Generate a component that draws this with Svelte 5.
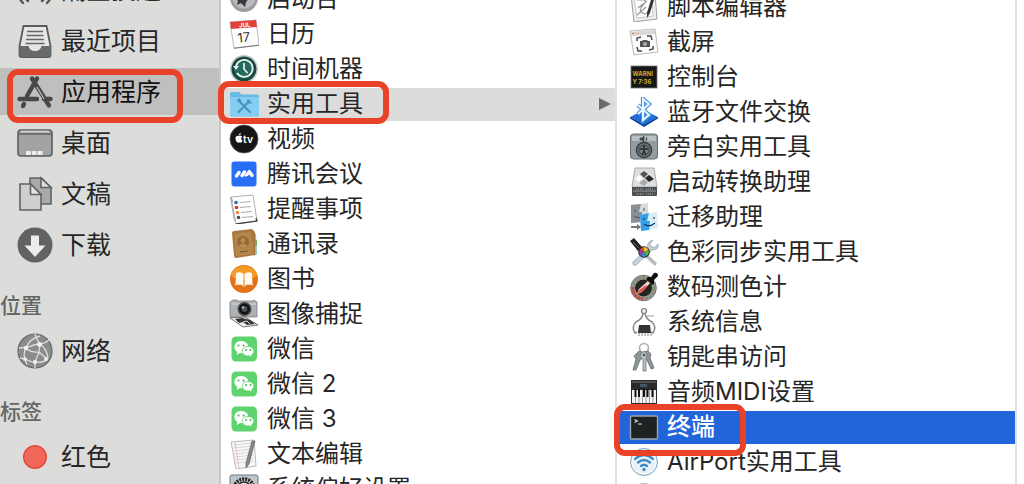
<script>
    const places = [
        {
            title: null,
            items: [
                { id: "airdrop", name: "隔空投送" },
                { id: "recents", name: "最近项目" },
                { id: "apps", name: "应用程序" },
                { id: "desktop", name: "桌面" },
                { id: "documents", name: "文稿" },
                { id: "downloads", name: "下载" },
            ],
        },
        { title: "位置", items: [{ id: "network", name: "网络" }] },
        { title: "标签", items: [{ id: "red", name: "红色" }] },
    ];

    const apps = [
        { id: "launchpad", name: "启动台" },
        { id: "calendar", name: "日历" },
        { id: "timemachine", name: "时间机器" },
        { id: "utilities", name: "实用工具", folder: true },
        { id: "tv", name: "视频" },
        { id: "meeting", name: "腾讯会议" },
        { id: "reminders", name: "提醒事项" },
        { id: "contacts", name: "通讯录" },
        { id: "books", name: "图书" },
        { id: "capture", name: "图像捕捉" },
        { id: "wechat", name: "微信" },
        { id: "wechat", name: "微信 2" },
        { id: "wechat", name: "微信 3" },
        { id: "textedit", name: "文本编辑" },
        { id: "settings", name: "系统偏好设置" },
    ];

    const utilities = [
        { id: "script", name: "脚本编辑器" },
        { id: "screenshot", name: "截屏" },
        { id: "console", name: "控制台" },
        { id: "bluetooth", name: "蓝牙文件交换" },
        { id: "voiceover", name: "旁白实用工具" },
        { id: "bootcamp", name: "启动转换助理" },
        { id: "migration", name: "迁移助理" },
        { id: "colorsync", name: "色彩同步实用工具" },
        { id: "colormeter", name: "数码测色计" },
        { id: "sysinfo", name: "系统信息" },
        { id: "keychain", name: "钥匙串访问" },
        { id: "midi", name: "音频MIDI设置" },
        { id: "terminal", name: "终端" },
        { id: "airport", name: "AirPort实用工具" },
        { id: "activity", name: "活动监视器" },
    ];

    // the path that the guide walks through
    const steps = ["apps", "utilities", "terminal"];

    let place = $state("应用程序");
    let app = $state("实用工具");
    let utility = $state("终端");
</script>

{#snippet sideIcon(id)}
    <svg class="side-icon" viewBox="0 0 36 36" aria-hidden="true">
        {#if id === "airdrop"}
            <g fill="none" stroke="#555" stroke-width="2.4" stroke-linecap="round">
                <path d="M6 31a17 17 0 1 1 24 0M11 29a11 11 0 1 1 14 0M15 24a5 5 0 1 1 6 0" />
            </g>
        {:else if id === "recents"}
            <path d="M6.500 3h23l4 20v9q0 2-2 2h-27q-2 0-2-2v-9z" fill="#e6e6e5" stroke="#5c5c5c" stroke-width="1.8" />
            <path d="M2.500 23h9q1 5 6.500 5t6.500-5h9v9q0 2-2 2h-27q-2 0-2-2z" fill="#6a6a6a" />
            <path d="M10 8.500h16M9.500 12.500h17M9 16.500h18M8.500 20.500h19" stroke="#666" stroke-width="1.500" />
        {:else if id === "apps"}
            <g stroke="#484848" stroke-width="4.400" stroke-linecap="round" fill="none">
                <path d="M20 4.500L10 22M15 4.500l17 27M2.500 25H20M27 25h6.500M7 30l-1 2" />
            </g>
            <path d="M20 13l7 12" stroke="#c0c0bf" stroke-width="1.200" />
        {:else if id === "desktop"}
            <rect x="1" y="5" width="34" height="26" rx="3" fill="#a3a3a3" stroke="#5d5d5d" stroke-width="1.600" />
            <path d="M2 9h32" stroke="#5d5d5d" stroke-width="1.400" />
            <path d="M4 6.500h28" stroke="#d9d9d9" stroke-width="1.500" />
            <path d="M9 26h5v4H9zM15 26h4.500v4H15zM20.500 26h5v4h-5z" fill="#ededed" />
        {:else if id === "documents"}
            <g stroke="#626262" stroke-width="1.600">
                <path d="M13 2h11.500L34 11.500V28H13z" fill="#a9a9a9" />
                <path d="M24 2v9.500h10z" fill="#dedede" />
                <path d="M3 8h10.500L24 18.500V34H3z" fill="#cfcfce" />
                <path d="M13.500 8v10.500H24z" fill="#e4e4e3" />
            </g>
        {:else if id === "downloads"}
            <circle cx="18" cy="18" r="17.500" fill="#626262" />
            <path d="M14 8.500h8v10h6.500L18 30 7.500 18.500H14z" fill="#ececeb" />
        {:else if id === "network"}
            <circle cx="18" cy="18" r="17" fill="#8c8c8c" stroke="#686868" stroke-width="1.200" />
            <g fill="none" stroke="#dedede" stroke-width="1.300">
                <path d="M2 15q7-1 7 0q9-4 14-4 6-1 9-4M9 15q3-9 14-12M9 15q-3 6-1 11q8 4 11 3q8 1 11-3M23 11l-1 8-4 10M23 11q-4-5-5-10M23 11q7 5 8 14M22 19l8 7M22 19q-8 1-13-4M3 25l5 1 2 6M18 29v6" />
            </g>
            <g fill="#f2f2f2">
                <circle cx="9" cy="15" r="2.200" /><circle cx="22.500" cy="11.500" r="2.400" />
                <circle cx="8" cy="26" r="1.800" /><circle cx="18" cy="29" r="2" /><circle cx="29" cy="26" r="1.900" />
            </g>
        {:else}
            <circle cx="18" cy="18" r="11.300" fill="#f1675a" stroke="#e0483f" stroke-width="1.400" />
        {/if}
    </svg>
{/snippet}

{#snippet icon(id)}
    <svg class="icon" viewBox="0 0 30 30" aria-hidden="true">
        {#if id === "launchpad"}
            <circle cx="15" cy="14" r="14" fill="#9b9c9e" />
            <circle cx="15" cy="13" r="11.500" fill="#b9babc" />
            <path d="M21 5q-8 1-11 8l-4 1 3 3-1 4 4-2 4 4 1-5q5-5 4-13z" fill="#37393c" />
        {:else if id === "calendar"}
            <path d="M1 3L27 1l3 25-25 3z" fill="#fdfdfd" stroke="#aaa" stroke-width=".8" />
            <path d="M1 3L27 1l1 7L2 10z" fill="#e2403a" />
            <text x="10" y="8.300" font-size="6" font-weight="700" fill="#fff" transform="rotate(-4 14 6)">JUL</text>
            <text x="8.500" y="23" font-size="13" fill="#333" transform="rotate(-6 15 18)">17</text>
            <path d="M5 29.300l25-3" stroke="#777" />
        {:else if id === "timemachine"}
            <circle cx="15" cy="15" r="14" fill="#c6cccb" />
            <circle cx="15" cy="15" r="12.500" fill="#17493f" />
            <circle cx="15" cy="15" r="9.500" fill="#256b5d" />
            <path d="M7 12a8.500 8.500 0 1 1 1 7" fill="none" stroke="#e8f3f0" stroke-width="1.800" />
            <path d="M4 12l6 0-3 4z" fill="#e8f3f0" />
            <path d="M15 9v6l3.500 4" fill="none" stroke="#e8f3f0" stroke-width="1.700" />
        {:else if id === "utilities"}
            <path d="M1 5q0-2 2-2h7l2.500 2.500H28q2 0 2 2V26q0 1.500-2 1.500H3q-2 0-2-1.500z" fill="#68b9e3" />
            <path d="M1 8h29v18q0 1-2 1H3q-2 0-2-1z" fill="#85cef2" />
            <path d="M10 12l11 11M20.500 12L9.500 23" stroke="#4a93bd" stroke-width="2.200" stroke-linecap="round" />
            <path d="M18.500 10.500l1 3 3 .5M8 12l2-2 2 2" fill="none" stroke="#4a93bd" stroke-width="1.600" />
        {:else if id === "tv"}
            <circle cx="15" cy="15" r="14" fill="#161616" stroke="#555" stroke-width=".8" />
            <path d="M10.200 12.200c1.300-1 2.700-.2 3 .2-1.600 1-1.300 3.300.4 4-.5 1.300-1.400 2.500-2.300 2.200-.8-.3-1.100-.3-1.900 0-1.500.5-4.200-4.200-2.300-6.100.9-.9 2-.8 3.100-.3zM9.800 11.500c0-1.300 1-2.300 2-2.400.1 1.300-.9 2.300-2 2.400z" fill="#fff" />
            <text x="14" y="18.500" font-size="10.500" font-weight="600" fill="#fff">tv</text>
        {:else if id === "meeting"}
            <rect x="2.500" y="2.500" width="25" height="25" rx="3" fill="#286ff5" />
            <path d="M7.500 17l2.500-3.500M13 16.500l2.500-3.500" stroke="#fff" stroke-width="3.400" stroke-linecap="round" />
            <path d="M15 17l4-5.500q1.200-1.300 2.500 0l3 4q1 2.500-1.500 2.500-1.500 0-2.800-2.500-2.200 3-5.200 1.500z" fill="#fff" />
        {:else if id === "reminders"}
            <path d="M2 3l22-2 4 26-21 3z" fill="#fff" stroke="#999" stroke-width=".8" />
            <path d="M7 30l21-3-1-3" fill="none" stroke="#444" stroke-width="1.300" />
            <path d="M2 3l2 5M1.500 3l4 24" stroke="#aaa" />
            <path d="M10.500 8.500l11-1M11 13.500l11-1M12 18.500l11-1M13 23.500l11-1" stroke="#aaa" />
            <circle cx="7" cy="8.500" r="1.800" fill="#2d69ca" /><circle cx="7.500" cy="13.500" r="1.800" fill="#d8372c" />
            <circle cx="8.500" cy="18.500" r="1.800" fill="#ef8b3c" /><circle cx="9.500" cy="23.500" r="1.800" fill="#544c51" />
        {:else if id === "contacts"}
            <path d="M25 5l2 0 1 20-3 2z" fill="#80bfb1" />
            <path d="M26 11h2v6h-2z" fill="#78ad53" />
            <path d="M3 4Q3 2 5 2l18-2 3 3v23L7 29q-2 0-2-2z" fill="#a9783f" />
            <path d="M5 5l17-2 3 22-18 2z" fill="#b3864c" />
            <circle cx="14" cy="13" r="6" fill="#94693a" />
            <circle cx="14" cy="11.500" r="2.400" fill="#b88b50" /><path d="M9.500 17q4.500-5 9 0-4 4-9 0z" fill="#b88b50" />
            <path d="M11 23l8-1" stroke="#795123" />
        {:else if id === "books"}
            <circle cx="15" cy="15" r="14" fill="#e17319" />
            <path d="M1.500 12a14 14 0 0 1 27 0q-13 8-27 0z" fill="#f39b27" />
            <path d="M7 9q5-2 7.500 1v11.500q-3-2.500-8-1L7 9zM23 9q-5-2-7.500 1v11.500q3-2.500 8-1z" fill="#fffaf1" />
            <path d="M6 21q6-2 9 1.500 3-3.500 9-1.500" fill="none" stroke="#ffe7c3" />
        {:else if id === "capture"}
            <path d="M1 3l3-2h4l1 1h14l2-1 3 2v15H1z" fill="#aeb1b3" stroke="#7c7f81" stroke-width=".8" />
            <path d="M2 5h25" stroke="#d8dadb" />
            <path d="M1 19l15-1 13 8-15 2z" fill="#eee" stroke="#555" stroke-width=".8" />
            <path d="M6 20l7-1 8 2 5 4-8 1-4-3-4 1z" fill="#333" />
            <path d="M14 23l4-1 3 3" fill="none" stroke="#ddd" />
            <circle cx="15.500" cy="10" r="7" fill="#45484a" /><circle cx="15.500" cy="10" r="5.400" fill="#111" />
            <circle cx="15.500" cy="10" r="3" fill="#494f55" /><circle cx="14" cy="8.500" r="1.300" fill="#b2b8bf" />
        {:else if id === "wechat"}
            <rect x="2.500" y="2.500" width="25.500" height="25" rx="4.500" fill="#5fd36d" />
            <path d="M12 7C5 7 3 15 8.500 18l-1 3 3.500-2q6 1 8.500-4C20 10 17 7 12 7z" fill="#fff" />
            <path d="M19 12.500c-6 0-7.500 6-3.500 8.500q2 1.300 5 .8l2.700 1.400-.7-2.300C27 18 25 12.500 19 12.500z" fill="#fff" stroke="#5fd36d" stroke-width=".8" />
            <g fill="#43aa50"><circle cx="9.500" cy="11.500" r="1" /><circle cx="14.500" cy="11.500" r="1" /><circle cx="17" cy="16" r=".9" /><circle cx="21.500" cy="16" r=".9" /></g>
        {:else if id === "textedit"}
            <path d="M2 3l23-2 2 26-20 3z" fill="#f7f7f7" stroke="#aaa" stroke-width=".8" />
            <path d="M4 6l20-2M4 9l20-2M5 12l19-2M5 15l19-2M6 18l18-2M6 21l18-2M7 24l17-2" stroke="#d5cccc" stroke-width=".8" />
            <path d="M6 3l4 26" stroke="#e3b5b5" stroke-width=".8" />
            <path d="M26 2l-6 23-3 4 0-5 6-22z" fill="#858a8e" stroke="#50565a" stroke-width=".6" />
        {:else if id === "settings"}
            <rect x="1" y="1" width="28" height="28" rx="2" fill="#bcc6ce" stroke="#6c7880" />
            <circle cx="15" cy="15" r="10" fill="#ddd" stroke="#262626" stroke-width="3.500" stroke-dasharray="2 1" />
            <circle cx="15" cy="15" r="7" fill="none" stroke="#222" stroke-width="1.500" />
        {:else if id === "script"}
            <path d="M2 3l24-2 2 26-23 3z" fill="#eee" stroke="#888" stroke-width=".8" />
            <path d="M5 6l18-2 1 20-16 2z" fill="#fff" stroke="#bbb" stroke-width=".8" />
            <path d="M8 8h7q3 1-1 5t-2 7q5 4 7-1M9 16l9-7M8 23l9-8" fill="none" stroke="#999" stroke-width="1.200" />
            <path d="M27 1l-6 20-3 5V21L24 1z" fill="#333" />
        {:else if id === "screenshot"}
            <path d="M1 4l25-2 3 23-24 3z" fill="#fbfbfb" stroke="#aaa" stroke-width=".8" />
            <path d="M1.500 5l24-2 1 4-24 2z" fill="#d8d8d8" />
            <circle cx="4" cy="6.500" r=".8" fill="#e55" /><circle cx="6.500" cy="6.300" r=".8" fill="#eb4" /><circle cx="9" cy="6" r=".8" fill="#ea8" />
            <path d="M8 14l0-3 4-1M18 9l4 0 1 4M24 19l0 3-4 1M13 24l-4 0-1-4" fill="none" stroke="#4d4d4d" stroke-width="1.500" />
            <path d="M11 14h2l1-1h4l1 1h2v6H11z" fill="#555" /><circle cx="16" cy="17" r="2" fill="#aaa" />
        {:else if id === "console"}
            <rect x="2" y="4" width="26" height="22" fill="#171716" stroke="#777" stroke-width=".8" />
            <text x="3.500" y="13.500" font-size="6" font-weight="700" fill="#c9ad30">WARNI</text>
            <text x="3.500" y="21.500" font-size="6" font-weight="700" fill="#c9ad30">Y 7:36</text>
        {:else if id === "bluetooth"}
            <path d="M1 20l14-7 14 7-14 9z" fill="#1f6fd6" /><path d="M1 20v1.500L15 30l14-8.500V20l-14 8z" fill="#0e3e93" />
            <path d="M9 8l11 10-6 5V2l6 5L9 17" fill="none" stroke="#4790dd" stroke-width="4.200" />
            <path d="M9 8l11 10-6 5V2l6 5L9 17" fill="none" stroke="#eef8ff" stroke-width="2" />
        {:else if id === "voiceover"}
            <rect x="1.500" y="2" width="27" height="25" rx="3" fill="#929c9f" stroke="#647074" />
            <path d="M3 4h24v5H3z" fill="#b7c0c2" />
            <path d="M11 6h2l2-2v6l-2-2h-2zM17 5l1 2-1 2" fill="#3d4a4e" stroke="#3d4a4e" stroke-width=".8" />
            <circle cx="15" cy="18" r="7.500" fill="#737d80" stroke="#343b3e" stroke-width="1.500" />
            <circle cx="15" cy="18" r="5" fill="none" stroke="#343b3e" />
            <circle cx="15" cy="14.500" r="1.200" fill="#252b2d" /><path d="M11 17h8M15 16v3l-2 4M15 19l2 4" stroke="#252b2d" stroke-width="1.300" />
        {:else if id === "bootcamp"}
            <path d="M6 1h19l3 19H3z" fill="#dedfdf" stroke="#999" stroke-width=".8" />
            <path d="M3 20h25v8q0 1-1 1H4q-1 0-1-1z" fill="#4c5053" />
            <path d="M4 24h23" stroke="#989da0" /><path d="M7 22h7M17 22h7M7 27h7M17 27h7" stroke="#adb3b5" stroke-dasharray="1 1" />
            <path d="M15 4l4 3-4 4-4-4z" fill="#555" /><path d="M20 8l5 4-5 3-4-4z" fill="#272727" /><path d="M10 8l4 3-4 4-4-3z" fill="#fff" /><path d="M15 12l4 3-4 4-5-3z" fill="#aaa" />
        {:else if id === "migration"}
            <path d="M2 3l17-2v18L2 21z" fill="#d7dadd" /><path d="M2 3l10-1-2 8h3v10L2 21z" fill="#898f94" />
            <path d="M6 8v2M15 6v3M5 14q6 4 12-1" fill="none" stroke="#4b5155" />
            <path d="M11 13l17-3 1 16-17 3z" fill="#d9edf9" /><path d="M11 13l9-2-2 8h3l-1 9-8 1z" fill="#349ee8" />
            <path d="M15 16v2M25 15v2M15 22q5 4 11-1" fill="none" stroke="#173b62" stroke-width="1.200" />
            <path d="M2 24h6v-2l4 3-4 3v-2H2z" fill="#777" />
        {:else if id === "colorsync"}
            <path d="M24 3l-3 4 1 3 4 0 3-3q1 6-6 6L7 28q-4 1-3-3L19 11q-2-6 5-8z" fill="#c3d3d8" stroke="#8d9da3" stroke-width=".7" />
            <path d="M10 10l18 16-2 3L7 12z" fill="#b9bcbd" /><path d="M1 4l4-3 8 9-4 4z" fill="#222" /><path d="M4 5l7 7" stroke="#777" stroke-width=".8" />
            <circle cx="15" cy="15" r="5.800" fill="#202020" />
            <path d="M15 15V10a5 5 0 0 1 4.500 3z" fill="#f4bd35" /><path d="M15 15l4.500-2a5 5 0 0 1-2 6z" fill="#55b63b" />
            <path d="M15 15l2.500 4a5 5 0 0 1-6-.500z" fill="#3788d4" /><path d="M15 15l-3.500 3.500a5 5 0 0 1-.5-6z" fill="#9740a2" /><path d="M15 15l-4-2.500a5 5 0 0 1 4-2.500z" fill="#df4836" />
        {:else if id === "colormeter"}
            <circle cx="14.500" cy="16" r="12.800" fill="#a5a2a0" stroke="#777" />
            <circle cx="14.500" cy="16" r="10.500" fill="none" stroke="#7f8c74" stroke-width="3" stroke-dasharray="3 1" />
            <path d="M4 15a10.500 10.500 0 0 0 10 12" fill="none" stroke="#c34b43" stroke-width="3" stroke-dasharray="3 1" />
            <circle cx="14.500" cy="16" r="8.500" fill="#242424" />
            <path d="M7 23l3-6L20 8l2 2-9 10z" fill="#f4d6ce" /><path d="M7 23l2-4 8-6 1 2-5 5z" fill="#df5546" />
            <path d="M19 5l3 0 3-4q4-1 4 3l-4 4v4l-2 1-6-6z" fill="#111" />
        {:else if id === "sysinfo"}
            <circle cx="15" cy="4" r="2.500" fill="#eee" stroke="#777" stroke-width="1.200" />
            <path d="M14 7Q13 12 7 15q-5 5-1 11l2-1M16 7q1 5 7 8 5 5 1 11l-2-1" fill="none" stroke="#888" stroke-width="1.500" />
            <path d="M18 9h7" stroke="#999" />
            <path d="M10 18h11l1 8H9z" fill="#343434" /><path d="M10 26v3M13 26v3M16 26v3M19 26v3M22 26v3" stroke="#888" />
        {:else if id === "keychain"}
            <circle cx="15" cy="6" r="4.500" fill="none" stroke="#adb1b3" stroke-width="1.700" />
            <path d="M10 9l4 2 0 5-3 2-4 10-3 0 3-11-2-3zM15 10l4-1 3 3-1 4 4 10-3 1-4-9-3-2z" fill="#8e969a" stroke="#636b70" stroke-width=".8" />
            <path d="M12 11q4-3 6 1l-1 5v12l-3 0V17l-3-2z" fill="#b9c1c5" stroke="#6c7479" stroke-width=".8" />
            <circle cx="15" cy="13" r="1.200" fill="#454b4f" />
        {:else if id === "midi"}
            <path d="M2 3h26v24H2z" fill="#292b2c" /><path d="M3 5h24" stroke="#777" /><path d="M11 7h7v3h-7z" fill="#41576a" />
            <path d="M3 13h24v13H3z" fill="#f3f3f3" /><path d="M6.500 13v13M10 13v13M13.500 13v13M17 13v13M20.500 13v13M24 13v13" stroke="#777" stroke-width=".7" />
            <path d="M6.500 12v8M10 12v8M15 12v8M18.500 12v8M23.500 12v8" stroke="#111" stroke-width="2" />
        {:else if id === "terminal"}
            <rect x="1.500" y="4" width="27" height="23" rx="1" fill="#1f2223" stroke="#9ca5af" stroke-width="1.400" />
            <path d="M5.500 7.500l3 1.500-3 1.500M9 12h4" fill="none" stroke="#ddd" stroke-width="1.100" />
        {:else if id === "airport"}
            <circle cx="15" cy="15" r="13.500" fill="#d9e5ed" stroke="#7daace" />
            <circle cx="15" cy="15" r="12" fill="#e8f1f5" stroke="#fff" />
            <g fill="none" stroke="#3d87c7" stroke-width="2.300" stroke-linecap="round">
                <path d="M6 12q9-8 18 0M9 15.500q6-5 12 0M12 19q3-2.500 6 0" />
            </g>
            <circle cx="15" cy="22.500" r="1.700" fill="#3d87c7" />
        {:else}
            <circle cx="15" cy="15" r="14" fill="#bbb" /><path d="M3 16h6l3-7 5 13 3-6h7" fill="none" stroke="#333" />
        {/if}
    </svg>
{/snippet}

<main>
    <nav class="sidebar">
        {#each places as group}
            {#if group.title}
                <h2>{group.title}</h2>
            {/if}
            <ul>
                {#each group.items as item}
                    <li>
                        <button class:current={item.name === place} onclick={() => (place = item.name)}>
                            {@render sideIcon(item.id)}
                            <span>{item.name}</span>
                        </button>
                        {#if steps.includes(item.id)}
                            <i class="mark mark-{item.id}"></i>
                        {/if}
                    </li>
                {/each}
            </ul>
        {/each}
    </nav>

    <section class="column apps">
        <ul>
            {#each apps as item}
                <li>
                    <button class:current={item.name === app} onclick={() => (app = item.name)}>
                        {@render icon(item.id)}
                        <span>{item.name}</span>
                        {#if item.folder}
                            <svg class="arrow" viewBox="0 0 12 14" aria-hidden="true"><path d="M0 1v12l12-6z" fill="#6c6c6c" /></svg>
                        {/if}
                    </button>
                    {#if steps.includes(item.id)}
                        <i class="mark mark-{item.id}"></i>
                    {/if}
                </li>
            {/each}
        </ul>
    </section>

    <section class="column utilities">
        <ul>
            {#each utilities as item}
                <li>
                    <button class:current={item.name === utility} onclick={() => (utility = item.name)}>
                        {@render icon(item.id)}
                        <span>{item.name}</span>
                    </button>
                    {#if steps.includes(item.id)}
                        <i class="mark mark-{item.id}"></i>
                    {/if}
                </li>
            {/each}
        </ul>
    </section>
</main>

<style>
    :global(body) {
        margin: 0;
        background: #fff;
    }

    main {
        display: flex;
        height: 100vh;
        overflow: hidden;
        padding-right: 7px;
        box-sizing: border-box;
        font-family: Inter, "Noto Sans CJK SC", sans-serif;
        color: #262626;
    }

    ul {
        list-style: none;
        margin: 0;
        padding: 0;
        display: flex;
        flex-direction: column;
    }

    li {
        position: relative;
    }

    button {
        display: flex;
        align-items: center;
        gap: 8px;
        width: 100%;
        box-sizing: border-box;
        border: 0;
        background: none;
        font: inherit;
        color: inherit;
        text-align: left;
        white-space: nowrap;
    }

    button span {
        padding-bottom: 4px;
    }

    svg {
        flex: none;
    }

    .sidebar {
        flex: none;
        width: 221px;
        box-sizing: border-box;
        border-right: 2px solid #c9c9c9;
        background: #dcdcdb;
        font-size: 25px;
    }

    .sidebar ul {
        gap: 4px;
    }

    .sidebar ul:first-child {
        margin-top: -34px;
    }

    .sidebar button {
        height: 47px;
        padding: 0 0 0 17px;
    }

    .sidebar .current {
        background: #bfbfbe;
        color: #111;
    }

    .side-icon {
        width: 36px;
        height: 36px;
    }

    h2 {
        margin: 26px 0 9px;
        font-size: 21px;
        line-height: 24px;
        font-weight: 500;
        color: #666;
    }

    .column {
        min-width: 0;
        font-size: 24px;
    }

    .column ul {
        gap: 2px;
    }

    .column button {
        height: 33px;
        padding: 0 0 2px 8px;
    }

    .icon {
        width: 30px;
        height: 30px;
    }

    .apps {
        flex: 394 1 0;
    }

    .apps ul {
        margin-top: -17px;
    }

    .apps .current {
        background: #dcdcdc;
    }

    .arrow {
        width: 12px;
        height: 14px;
        margin-left: auto;
        margin-right: 4px;
    }

    .utilities {
        flex: 398 1 0;
        box-sizing: border-box;
        border: solid #e2e2e2;
        border-width: 0 2px;
    }

    .utilities ul {
        margin-top: -9px;
    }

    .utilities button {
        padding-left: 12px;
    }

    .utilities .current {
        background: #2264d9;
        color: #fff;
        font-weight: 500;
    }

    /* red frames around the steps to follow */
    .mark {
        position: absolute;
        z-index: 1;
        box-sizing: border-box;
        border: 6px solid #ea4228;
        border-radius: 11px;
        pointer-events: none;
    }

    .mark-apps {
        left: 7px;
        top: 1px;
        width: 176px;
        height: 54px;
    }

    .mark-utilities {
        left: -3px;
        top: -7px;
        width: 171px;
        height: 43px;
    }

    .mark-terminal {
        left: -3px;
        top: -7px;
        width: 132px;
        height: 52px;
    }
</style>
